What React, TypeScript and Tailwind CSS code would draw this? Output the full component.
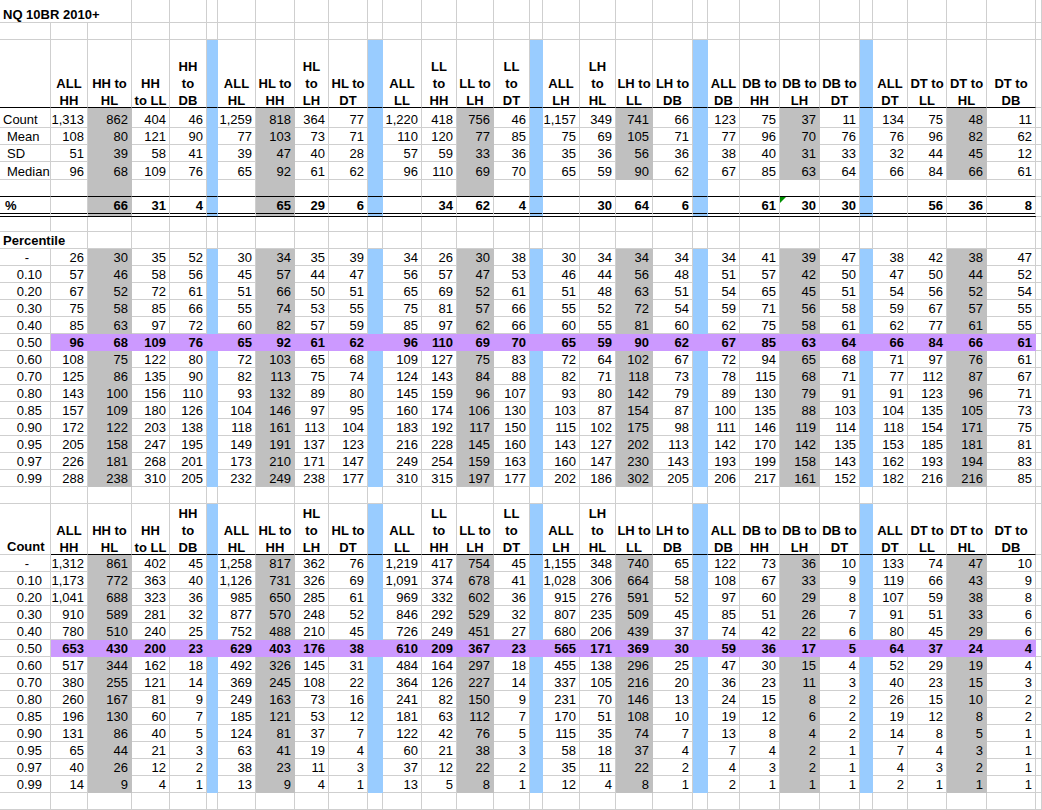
import React from "react";

const COLS =
  "grid grid-cols-[51px_37px_44px_38px_37px_11px_38px_39px_34px_39px_15px_39px_35px_37px_36px_13px_37px_36px_37px_40px_15px_32px_40px_40px_40px_13px_35px_39px_40px_49px_6px]";

type Fill = "none" | "gray" | "blue" | "purple";
type Bottom = "grid" | "black" | "double";
type C = {
  t?: string;
  fill?: Fill;
  bottom?: Bottom;
  align?: "r" | "c" | "l";
  bold?: boolean;
  pad?: string;
  head?: string[];
  tri?: boolean;
  span?: 2 | 3;
};

const FILL: Record<Fill, string> = {
  none: "bg-white border-r-[#cfcfcf]",
  gray: "bg-[#c0c0c0] border-r-[#c0c0c0]",
  blue: "bg-[#99ccff] border-r-[#99ccff]",
  purple: "bg-[#cc99ff] border-r-[#cc99ff]",
};
const BGRID: Record<Fill, string> = {
  none: "border-b border-b-[#cfcfcf]",
  gray: "border-b border-b-[#c0c0c0]",
  blue: "border-b border-b-[#99ccff]",
  purple: "border-b border-b-[#cc99ff]",
};

const HEADS: string[][][] = [
  [["ALL", "HH"], ["HH to", "HL"], ["HH", "to LL"], ["HH", "to", "DB"]],
  [["ALL", "HL"], ["HL to", "HH"], ["HL", "to", "LH"], ["HL to", "DT"]],
  [["ALL", "LL"], ["LL", "to", "HH"], ["LL to", "LH"], ["LL", "to", "DT"]],
  [["ALL", "LH"], ["LH", "to", "HL"], ["LH to", "LL"], ["LH to", "DB"]],
  [["ALL", "DB"], ["DB to", "HH"], ["DB to", "LH"], ["DB to", "DT"]],
  [["ALL", "DT"], ["DT to", "LL"], ["DT to", "HL"], ["DT to", "DB"]],
];
const GRAYCOL = [1, 1, 2, 2, 2, 2];
const GRAYLAST = [5, 5, 4, 3, 3, 3];

const TOP: string[][] = [
  "1,313 862 404 46 1,259 818 364 77 1,220 418 756 46 1,157 349 741 66 123 75 37 11 134 75 48 11".split(" "),
  "108 80 121 90 77 103 73 71 110 120 77 85 75 69 105 71 77 96 70 76 76 96 82 62".split(" "),
  "51 39 58 41 39 47 40 28 57 59 33 36 35 36 56 36 38 40 31 33 32 44 45 12".split(" "),
  "96 68 109 76 65 92 61 62 96 110 69 70 65 59 90 62 67 85 63 64 66 84 66 61".split(" "),
];
const PCT_ROW = ["", "66", "31", "4", "", "65", "29", "6", "", "34", "62", "4", "", "30", "64", "6", "", "61", "30", "30", "", "56", "36", "8"];

const LABELS = ["-", "0.10", "0.20", "0.30", "0.40", "0.50", "0.60", "0.70", "0.80", "0.85", "0.90", "0.95", "0.97", "0.99"];

const PERC: string[][] = [
  "26 30 35 52 30 34 35 39 34 26 30 38 30 34 34 34 34 41 39 47 38 42 38 47",
  "57 46 58 56 45 57 44 47 56 57 47 53 46 44 56 48 51 57 42 50 47 50 44 52",
  "67 52 72 61 51 66 50 51 65 69 52 61 51 48 63 51 54 65 45 51 54 56 52 54",
  "75 58 85 66 55 74 53 55 75 81 57 66 55 52 72 54 59 71 56 58 59 67 57 55",
  "85 63 97 72 60 82 57 59 85 97 62 66 60 55 81 60 62 75 58 61 62 77 61 55",
  "96 68 109 76 65 92 61 62 96 110 69 70 65 59 90 62 67 85 63 64 66 84 66 61",
  "108 75 122 80 72 103 65 68 109 127 75 83 72 64 102 67 72 94 65 68 71 97 76 61",
  "125 86 135 90 82 113 75 74 124 143 84 88 82 71 118 73 78 115 68 71 77 112 87 67",
  "143 100 156 110 93 132 89 80 145 159 96 107 93 80 142 79 89 130 79 91 91 123 96 71",
  "157 109 180 126 104 146 97 95 160 174 106 130 103 87 154 87 100 135 88 103 104 135 105 73",
  "172 122 203 138 118 161 113 104 183 192 117 150 115 102 175 98 111 146 119 114 118 154 171 75",
  "205 158 247 195 149 191 137 123 216 228 145 160 143 127 202 113 142 170 142 135 153 185 181 81",
  "226 181 268 201 173 210 171 147 249 254 159 163 160 147 230 143 193 199 158 143 162 193 194 83",
  "288 238 310 205 232 249 238 177 310 315 197 177 202 186 302 205 206 217 161 152 182 216 216 85",
].map((s) => s.split(" "));

const CNT: string[][] = [
  "1,312 861 402 45 1,258 817 362 76 1,219 417 754 45 1,155 348 740 65 122 73 36 10 133 74 47 10",
  "1,173 772 363 40 1,126 731 326 69 1,091 374 678 41 1,028 306 664 58 108 67 33 9 119 66 43 9",
  "1,041 688 323 36 985 650 285 61 969 332 602 36 915 276 591 52 97 60 29 8 107 59 38 8",
  "910 589 281 32 877 570 248 52 846 292 529 32 807 235 509 45 85 51 26 7 91 51 33 6",
  "780 510 240 25 752 488 210 45 726 249 451 27 680 206 439 37 74 42 22 6 80 45 29 6",
  "653 430 200 23 629 403 176 38 610 209 367 23 565 171 369 30 59 36 17 5 64 37 24 4",
  "517 344 162 18 492 326 145 31 484 164 297 18 455 138 296 25 47 30 15 4 52 29 19 4",
  "380 255 121 14 369 245 108 22 364 126 227 14 337 105 216 20 36 23 11 3 40 23 15 3",
  "260 167 81 9 249 163 73 16 241 82 150 9 231 70 146 13 24 15 8 2 26 15 10 2",
  "196 130 60 7 185 121 53 12 181 63 112 7 170 51 108 10 19 12 6 2 19 12 8 2",
  "131 86 40 5 124 81 37 7 122 42 76 5 115 35 74 7 13 8 4 2 14 8 5 1",
  "65 44 21 3 63 41 19 4 60 21 38 3 58 18 37 4 7 4 2 1 7 4 3 1",
  "40 26 12 2 38 23 11 3 37 12 22 2 35 11 22 2 4 3 2 1 4 3 2 1",
  "14 9 4 1 13 9 4 1 13 5 8 1 12 4 8 1 2 1 1 1 2 1 1 1",
].map((s) => s.split(" "));

type Opt = {
  blue?: boolean;
  gray?: (g: number) => boolean;
  purple?: boolean;
  bold?: boolean;
  bottom?: Bottom;
  labelBottom?: Bottom;
  heads?: boolean;
  tri?: number;
};

function makeRow(label: C, vals: string[] | null, o: Opt): C[] {
  const bottom = o.bottom ?? "grid";
  const cells: C[] = [{ ...label, bottom: o.labelBottom ?? bottom }];
  for (let g = 0; g < 6; g++) {
    for (let c = 0; c < 4; c++) {
      const fill: Fill = o.purple ? "purple" : o.gray && o.gray(g) && c === GRAYCOL[g] ? "gray" : "none";
      cells.push({
        t: vals ? vals[g * 4 + c] : "",
        fill,
        bottom,
        bold: o.bold,
        head: o.heads ? HEADS[g][c] : undefined,
        align: o.heads ? "c" : "r",
        tri: o.tri === g * 4 + c,
      });
    }
    if (g < 5) cells.push({ fill: o.purple ? "purple" : o.blue ? "blue" : "none", bottom });
  }
  cells.push({ bottom: "grid" });
  return cells;
}

function Cell({ c, h }: { c: C; h: string }) {
  const fill = c.fill ?? "none";
  const bottom = c.bottom ?? "grid";
  const b =
    bottom === "grid"
      ? BGRID[fill]
      : bottom === "black"
      ? "border-b border-b-black"
      : "border-b-4 border-double border-b-black";
  const al = c.head || c.align === "c" ? "justify-center" : c.align === "l" ? "justify-start" : "justify-end";
  const pad = c.pad ?? (c.head || c.align === "c" ? "" : c.align === "l" ? "pl-[3px]" : "pr-[3px]");
  const span = c.span === 3 ? "col-span-3" : c.span === 2 ? "col-span-2" : "";
  return (
    <div
      className={[
        "relative flex items-end border-r whitespace-nowrap",
        h,
        FILL[fill],
        b,
        al,
        pad,
        span,
        c.bold ? "font-bold" : "",
      ].join(" ")}
    >
      {c.tri ? (
        <span className="absolute left-0 top-0 h-0 w-0 border-t-[6px] border-r-[6px] border-t-[#009000] border-r-transparent" />
      ) : null}
      {c.head ? (
        <div className="translate-y-[2px] text-center font-bold leading-[17px]">
          {c.head.map((l, i) => (
            <div key={i}>{l}</div>
          ))}
        </div>
      ) : c.t ? (
        <span className="leading-[15px]">{c.t}</span>
      ) : null}
    </div>
  );
}

function Row({ cells, h }: { cells: C[]; h: string }) {
  return (
    <div className={COLS}>
      {cells.map((c, i) => (
        <Cell key={i} c={c} h={h} />
      ))}
    </div>
  );
}

export default function App() {
  const rows: { cells: C[]; h: string }[] = [];

  const title = makeRow({}, null, {});
  title.splice(0, 3, { t: "NQ 10BR 2010+", bold: true, align: "l", pad: "pl-[3px]", span: 3 });
  rows.push({ cells: title, h: "h-[23px]" });
  rows.push({ cells: makeRow({}, null, {}), h: "h-[17px]" });
  rows.push({ cells: makeRow({}, null, { blue: true, heads: true, bottom: "black" }), h: "h-[68px]" });

  const topLabels: C[] = [
    { t: "Count", align: "l", pad: "pl-[3px]" },
    { t: "Mean", align: "l", pad: "pl-[7px]" },
    { t: "SD", align: "l", pad: "pl-[7px]" },
    { t: "Median", align: "l", pad: "pl-[7px]" },
  ];
  const topH = ["h-[20px]", "h-[17px]", "h-[17px]", "h-[18px]"];
  TOP.forEach((vals, r) => {
    rows.push({
      cells: makeRow(topLabels[r], vals, { blue: true, gray: (g) => r <= GRAYLAST[g] }),
      h: topH[r],
    });
  });
  rows.push({
    cells: makeRow({}, null, { blue: true, gray: (g) => 4 <= GRAYLAST[g], bottom: "black" }),
    h: "h-[17px]",
  });
  rows.push({
    cells: makeRow({ t: "%", align: "l", pad: "pl-[5px]", bold: true }, PCT_ROW, {
      blue: true,
      gray: (g) => 5 <= GRAYLAST[g],
      bold: true,
      bottom: "double",
      tri: 18,
    }),
    h: "h-[20px]",
  });
  rows.push({ cells: makeRow({}, null, {}), h: "h-[15px]" });
  const pl = makeRow({}, null, {});
  pl.splice(0, 2, { t: "Percentile", bold: true, align: "l", pad: "pl-[3px]", span: 2 });
  rows.push({ cells: pl, h: "h-[17px]" });

  const labelCell = (l: string): C =>
    l === "-" ? { t: "-", align: "r", pad: "pr-[21px]" } : { t: l, align: "r", pad: "pr-[8px]" };

  PERC.forEach((vals, r) => {
    const purple = LABELS[r] === "0.50";
    rows.push({
      cells: makeRow(labelCell(LABELS[r]), vals, { blue: true, gray: () => true, purple, bold: purple }),
      h: "h-[17px]",
    });
  });
  rows.push({ cells: makeRow({}, null, {}), h: "h-[17px]" });
  rows.push({
    cells: makeRow({ t: "Count", bold: true, align: "l", pad: "pl-[7px]" }, null, {
      blue: true,
      heads: true,
      bottom: "black",
      labelBottom: "grid",
    }),
    h: "h-[51px]",
  });
  CNT.forEach((vals, r) => {
    const purple = LABELS[r] === "0.50";
    rows.push({
      cells: makeRow(labelCell(LABELS[r]), vals, { blue: true, gray: () => true, purple, bold: purple }),
      h: "h-[17px]",
    });
  });
  rows.push({ cells: makeRow({}, null, {}), h: "h-[17px]" });

  return (
    <div className="h-[810px] w-[1042px] overflow-hidden bg-white text-[13px] text-black font-['Liberation_Sans',Arial,sans-serif]">
      {rows.map((r, i) => (
        <Row key={i} cells={r.cells} h={r.h} />
      ))}
    </div>
  );
}
